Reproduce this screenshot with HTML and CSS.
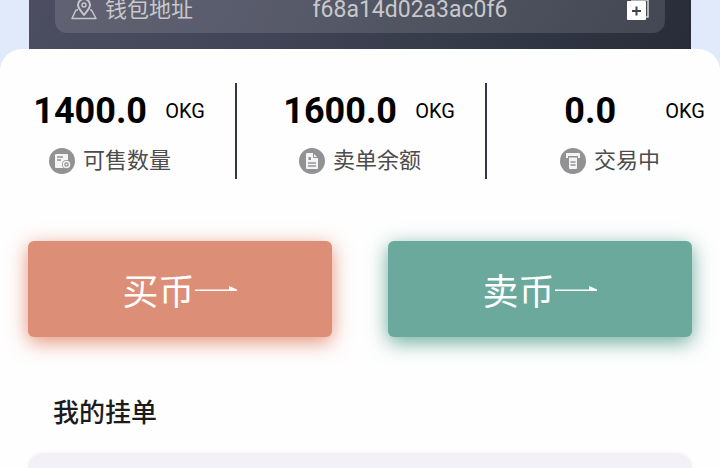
FILE: index.html
```html
<!DOCTYPE html>
<html lang="zh-CN">
<head>
    <meta charset="UTF-8">
    <meta name="viewport" content="width=device-width, initial-scale=1.0">
    <title>OKG</title>
    <link rel="stylesheet" href="styles.css">
</head>
<body>

<header class="wallet-card">
    <div class="address-bar">
        <svg class="pin-icon" width="28" height="28" viewBox="0 0 28 28" fill="none" stroke="currentColor" stroke-width="1.5" stroke-linejoin="round">
            <path d="M8 14H6L2 22.5H26L21.5 14H20"/>
            <path d="M14 19C11 15 8 12 8 9A6 6 0 0 1 20 9C20 12 17 15 14 19Z" stroke-width="2"/>
            <circle cx="14" cy="9" r="2"/>
        </svg>
        <span class="address-label">钱包地址</span>
        <span class="address-value">f68a14d02a3ac0f6</span>
        <button class="copy-button" type="button" aria-label="复制">
            <svg width="23" height="26" viewBox="0 0 23 26">
                <path d="M4 3H21V20H19" fill="none" stroke="#d5d6da" stroke-width="1.5"/>
                <rect x="0" y="4" width="19" height="19" rx="1" fill="#fff"/>
                <path d="M5 14H14M9.5 9.5V18.5" stroke="#41454f" stroke-width="2"/>
            </svg>
        </button>
    </div>
</header>

<main class="sheet">
    <section class="stats">
        <div class="stat">
            <div class="stat-amount">
                <strong class="stat-number">1400.0</strong>
                <span class="stat-unit">OKG</span>
            </div>
            <div class="stat-label">
                <svg width="26" height="26" viewBox="0 0 26 26">
                    <circle cx="13" cy="13" r="13" fill="#929294"/>
                    <path d="M7 6H18Q19 6 19 7V20H7Q6 20 6 19V7Q6 6 7 6Z" fill="#f4f4f6"/>
                    <path d="M8 9H14M8 12H12" stroke="#929294" stroke-width="1.5"/>
                    <circle cx="17.5" cy="16.5" r="4.5" fill="#929294"/>
                    <circle cx="17.5" cy="16.5" r="3" fill="none" stroke="#f4f4f6" stroke-width="1.5"/>
                    <circle cx="17.5" cy="16.5" r="1" fill="#f4f4f6"/>
                </svg>
                <span>可售数量</span>
            </div>
        </div>
        <div class="divider"></div>
        <div class="stat">
            <div class="stat-amount">
                <strong class="stat-number">1600.0</strong>
                <span class="stat-unit">OKG</span>
            </div>
            <div class="stat-label">
                <svg width="26" height="26" viewBox="0 0 26 26">
                    <circle cx="13" cy="13" r="13" fill="#929294"/>
                    <path d="M8 5H14L19 10V20Q19 21 18 21H8Q7 21 7 20V6Q7 5 8 5Z" fill="#f4f4f6"/>
                    <path d="M14.5 5V9.5H19" fill="none" stroke="#929294"/>
                    <path d="M9.5 9H12V12H9.5Z" fill="#929294"/>
                    <path d="M9 15H17M9 18H17" stroke="#929294" stroke-width="1.5"/>
                </svg>
                <span>卖单余额</span>
            </div>
        </div>
        <div class="divider"></div>
        <div class="stat">
            <div class="stat-amount">
                <strong class="stat-number">0.0</strong>
                <span class="stat-unit">OKG</span>
            </div>
            <div class="stat-label">
                <svg width="26" height="26" viewBox="0 0 26 26">
                    <circle cx="13" cy="13" r="13" fill="#929294"/>
                    <path d="M6 10V6Q6 5 7 5H19Q20 5 20 6V10H18V8H8V10Z" fill="#f4f4f6"/>
                    <path d="M9 9.5H17V20Q17 21 16 21H10Q9 21 9 20Z" fill="#f4f4f6"/>
                    <path d="M10.5 14H15.5M10.5 17H15.5" stroke="#929294" stroke-width="1.5"/>
                </svg>
                <span>交易中</span>
            </div>
        </div>
    </section>

    <div class="actions">
        <button class="action buy" type="button">
            <span>买币</span>
            <svg width="43" height="12" viewBox="0 0 43 12" fill="currentColor">
                <path d="M0 6.5H34V3L42 6.5V8H0Z"/>
            </svg>
        </button>
        <button class="action sell" type="button">
            <span>卖币</span>
            <svg width="43" height="12" viewBox="0 0 43 12" fill="currentColor">
                <path d="M0 6.5H34V3L42 6.5V8H0Z"/>
            </svg>
        </button>
    </div>

    <h2 class="section-title">我的挂单</h2>
    <div class="order-list"></div>
</main>

</body>
</html>
```

FILE: styles.css
```css
* {
    margin: 0;
    padding: 0;
    box-sizing: border-box;
}

body {
    font-family: Roboto, "Noto Sans CJK SC", sans-serif;
    background-color: #e1eafa;
    min-height: 100vh;
    display: flex;
    flex-direction: column;
}

button {
    border: none;
    background: none;
    font-family: inherit;
    cursor: pointer;
}

/* Wallet address */
.wallet-card {
    margin: 0 29px;
    padding: 0 26px 16px;
    background: linear-gradient(120deg, #4c4d61 0%, #424557 35%, #353b49 65%, #282c39 100%);
}

.address-bar {
    display: flex;
    align-items: center;
    height: 33px;
    padding: 0 15px 13px;
    border-radius: 0 0 12px 12px;
    background-color: rgba(255, 255, 255, 0.12);
    color: #c8c8cc;
    font-size: 22px;
    line-height: 20px;
}

.pin-icon {
    flex: none;
    margin-right: 7px;
}

.address-value {
    flex: 1;
    text-align: center;
    font-size: 23px;
}

.copy-button {
    display: flex;
}

/* White sheet */
.sheet {
    flex: 1;
    display: flex;
    flex-direction: column;
    padding-top: 34px;
    border-radius: 22px 22px 0 0;
    background-color: #fefefe;
}

.stats {
    display: flex;
}

.divider {
    width: 2px;
    margin: 0 13px 0 15px;
    background-color: #343846;
}

.stat {
    flex: 1;
    padding: 7px 0 4px;
}

.stat-amount {
    display: flex;
    align-items: center;
    gap: 15px;
    padding: 0 15px 0 30px;
    margin-bottom: 15px;
    line-height: 42px;
    color: #000;
}

.stat-number {
    flex: 1;
    text-align: center;
    font-size: 36px;
    font-weight: 700;
}

.stat-unit {
    font-size: 20px;
}

.stat-label {
    display: flex;
    justify-content: center;
    align-items: center;
    gap: 8px;
    font-size: 22px;
    line-height: 28px;
    color: #4c4c4c;
}

/* Buy and sell */
.actions {
    display: grid;
    grid-template-columns: 1fr 1fr;
    gap: 56px;
    padding: 0 28px;
    margin-top: 62px;
}

.action {
    display: flex;
    justify-content: center;
    align-items: center;
    height: 96px;
    border-radius: 6px;
    font-size: 36px;
    color: #fff;
}

.buy {
    background-color: #dd8e77;
    box-shadow: 0 5px 20px rgba(224, 120, 90, 0.8);
}

.sell {
    background-color: #6ba99d;
    box-shadow: 0 5px 20px rgba(70, 150, 130, 0.8);
}

/* Orders */
.section-title {
    margin: 56px 53px 20px;
    font-size: 26px;
    font-weight: 500;
    line-height: 40px;
    color: #1c1c1e;
}

.order-list {
    flex: 1;
    margin: 0 28px;
    border-radius: 32px 32px 0 0;
    background-color: #f4f0f7;
    box-shadow: 0 0 4px #f4f0f7;
}
```
